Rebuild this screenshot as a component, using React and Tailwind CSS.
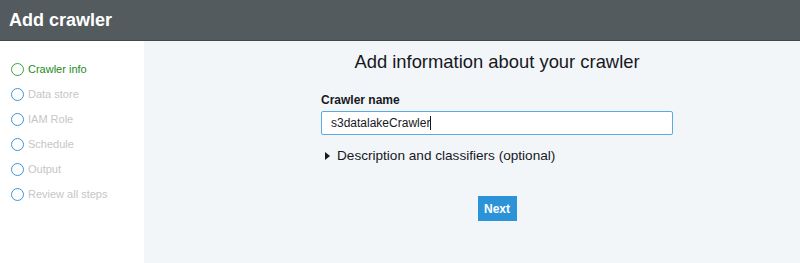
const steps = ['Crawler info', 'Data store', 'IAM Role', 'Schedule', 'Output', 'Review all steps'];

export default function App() {
  return (
    <div className="w-[800px] h-[263px] flex flex-col bg-white overflow-hidden" style={{ fontFamily: '"Liberation Sans", Arial, sans-serif' }}>
      {/* header */}
      <div className="h-[41px] shrink-0 bg-[#545b5e] border-b border-[#42484a] flex items-center px-[9px]">
        <h1 className="text-[18px] font-bold text-white leading-none">Add crawler</h1>
      </div>

      <div className="flex flex-1">
        {/* steps */}
        <div className="w-[144px] shrink-0 bg-white pt-[20px] pl-[11px]">
          <ul className="flex flex-col gap-[8px]">
            {steps.map((s, i) => (
              <li key={s} className="flex items-center gap-[4px] h-[17px]">
                <span className={`w-[13px] h-[13px] rounded-full border-[1.5px] ${i === 0 ? 'border-[#3aa43a]' : 'border-[#3c95de]'}`} />
                <span className={`text-[11px] ${i === 0 ? 'text-[#1e8b1e]' : 'text-[#c4c6c8]'}`}>{s}</span>
              </li>
            ))}
          </ul>
        </div>

        {/* main */}
        <div className="flex-1 bg-[#f3f6f8]">
          <div className="w-[352px] ml-[177px] flex flex-col">
            <h2 className="text-[18.4px] text-[#16191f] text-center mt-[9px] leading-[24px]">Add information about your crawler</h2>
            <label className="text-[12px] font-bold text-[#16191f] mt-[19px] leading-[14px]">Crawler name</label>
            <div className="mt-[4px] h-[24px] bg-white border-[1.5px] border-[#5ba8e2] rounded-[2px] flex items-center px-[9px] text-[12px] text-[#16191f]">
              s3datalakeCrawler<span className="w-px h-[14px] bg-[#16191f]" />
            </div>
            <div className="mt-[12px] flex items-center gap-[7px] pl-[4px]">
              <span className="w-0 h-0 border-y-[4px] border-y-transparent border-l-[5px] border-l-[#16191f]" />
              <span className="text-[13.6px] text-[#16191f] leading-[18px]">Description and classifiers (optional)</span>
            </div>
            <div className="flex justify-center mt-[31px]">
              <button className="w-[39px] h-[25px] bg-[#2d93d8] text-white text-[12px] font-bold">Next</button>
            </div>
          </div>
        </div>
      </div>
    </div>
  );
}
